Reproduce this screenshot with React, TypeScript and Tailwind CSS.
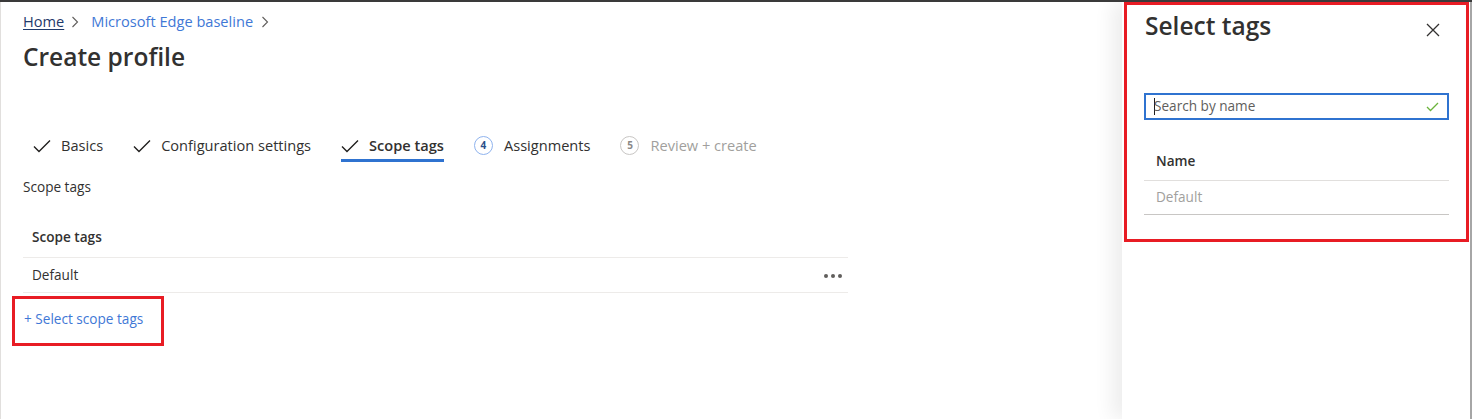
import React from 'react';

const font = { fontFamily: '"Open Sans", "Liberation Sans", Arial, sans-serif' };

const Check = ({ className = '' }: { className?: string }) => (
  <svg width="18" height="14" viewBox="0 0 18 14" className={className} fill="none">
    <path d="M1 7.5 L6 12.5 L17 1.5" stroke="currentColor" strokeWidth="1.4" />
  </svg>
);

const Chevron = () => (
  <svg width="8" height="12" viewBox="0 0 8 12" fill="none" className="text-[#605e5c]">
    <path d="M1.5 1 L6.5 6 L1.5 11" stroke="currentColor" strokeWidth="1.1" />
  </svg>
);

const StepTab = ({ label, done, active }: { label: string; done?: boolean; active?: boolean }) => (
  <div className={`flex items-center gap-[10px] h-[36px] pt-[6px] ${active ? 'border-b-[3px] border-[#2f73d0]' : 'border-b-[3px] border-transparent'}`}>
    {done && <Check className="text-[#201f1e]" />}
    <span className={`text-[14.6px] text-[#323130] ${active ? 'font-semibold' : ''}`}>{label}</span>
  </div>
);

const NumTab = ({ n, label, enabled }: { n: number; label: string; enabled?: boolean }) => (
  <div className="flex items-center gap-[11px] h-[36px] pt-[6px] border-b-[3px] border-transparent">
    <span
      className={`w-[19px] h-[19px] rounded-full border flex items-center justify-center text-[10px] font-bold ${
        enabled ? 'border-[#8fb3ee] text-[#2b4f8a]' : 'border-[#c8c6c4] text-[#8a8886]'
      }`}
    >
      {n}
    </span>
    <span className={`text-[14.6px] ${enabled ? 'text-[#323130]' : 'text-[#a19f9d]'}`}>{label}</span>
  </div>
);

export default function App() {
  return (
    <div style={font} className="w-[1472px] h-[419px] bg-white border-t-2 border-[#3a3a3a] flex overflow-hidden">
      {/* Main blade */}
      <div className="flex-1 border-l border-[#e1dfdd] pl-[22px]">
        <div className="flex items-center gap-[8px] h-[22px] mt-[9px] text-[14.6px]">
          <span className="text-[#1f3a6b] underline underline-offset-2">Home</span>
          <span className="ml-[-1px] mr-[4px]"><Chevron /></span>
          <span className="text-[#3f78d6]">Microsoft Edge baseline</span>
          <Chevron />
        </div>
        <h1 className="text-[24.5px] font-semibold text-[#323130] mt-[9px] leading-[30px]">Create profile</h1>

        <div className="flex items-center mt-[54px] pl-[10px] gap-[30px]">
          <StepTab label="Basics" done />
          <StepTab label="Configuration settings" done />
          <StepTab label="Scope tags" done active />
          <NumTab n={4} label="Assignments" enabled />
          <NumTab n={5} label="Review + create" />
        </div>

        <div className="text-[13.6px] text-[#323130] mt-[17px] leading-[16px]">Scope tags</div>

        <div className="w-[825px] mt-[22px]">
          <div className="h-[41px] flex items-center pl-[9px] text-[13.6px] font-semibold text-[#323130] border-b border-[#edebe9]">
            Scope tags
          </div>
          <div className="h-[35px] flex items-center justify-between pl-[9px] pr-[6px] text-[13.6px] text-[#323130] border-b border-[#edebe9]">
            <span>Default</span>
            <span className="flex gap-[3px] pt-[1px]">
              <span className="w-[4px] h-[4px] rounded-full bg-[#605e5c]" />
              <span className="w-[4px] h-[4px] rounded-full bg-[#605e5c]" />
              <span className="w-[4px] h-[4px] rounded-full bg-[#605e5c]" />
            </span>
          </div>
        </div>

        <div className="ml-[-11px] mt-[3px] inline-flex items-center w-[152px] h-[50px] border-[3px] border-[#e81c24] pl-[9px] pb-[3px] text-[13.6px] text-[#3f78d6]">
          + Select scope tags
        </div>
      </div>

      {/* Select tags panel */}
      <div className="w-[350px] h-full bg-white border-r-2 border-[#a6a6a6] shadow-[-10px_0_18px_rgba(0,0,0,0.07)] pl-[2px] pr-[1px]">
        <div className="h-[240px] border-[3px] border-[#e81c24] px-[17px]">
          <div className="flex items-start justify-between pt-[5px]">
            <h2 className="text-[24.5px] font-semibold text-[#323130] leading-[32px] ml-[1px]">Select tags</h2>
            <svg width="14" height="14" viewBox="0 0 14 14" className="mt-[13px] mr-[9px]" fill="none">
              <path d="M1 1 L13 13 M13 1 L1 13" stroke="#323130" strokeWidth="1.3" />
            </svg>
          </div>

          <div className="mt-[51px] h-[27px] border-2 border-[#2f73d0] flex items-center pl-[8px] pr-[8px]">
            <span className="w-px h-[17px] bg-[#201f1e]" />
            <span className="text-[13.6px] text-[#605e5c] flex-1 ml-[-1px]">Search by name</span>
            <svg width="13" height="10" viewBox="0 0 13 10" fill="none">
              <path d="M1 5 L4.5 8.5 L12 1" stroke="#6bb33c" strokeWidth="1.3" />
            </svg>
          </div>

          <div className="mt-[22px] h-[39px] flex items-center pl-[12px] text-[13.6px] font-semibold text-[#323130] border-b border-[#e1dfdd]">
            Name
          </div>
          <div className="h-[34px] flex items-center pl-[12px] text-[13.6px] text-[#a19f9d] border-b border-[#c8c6c4]">
            Default
          </div>
        </div>
      </div>
    </div>
  );
}
